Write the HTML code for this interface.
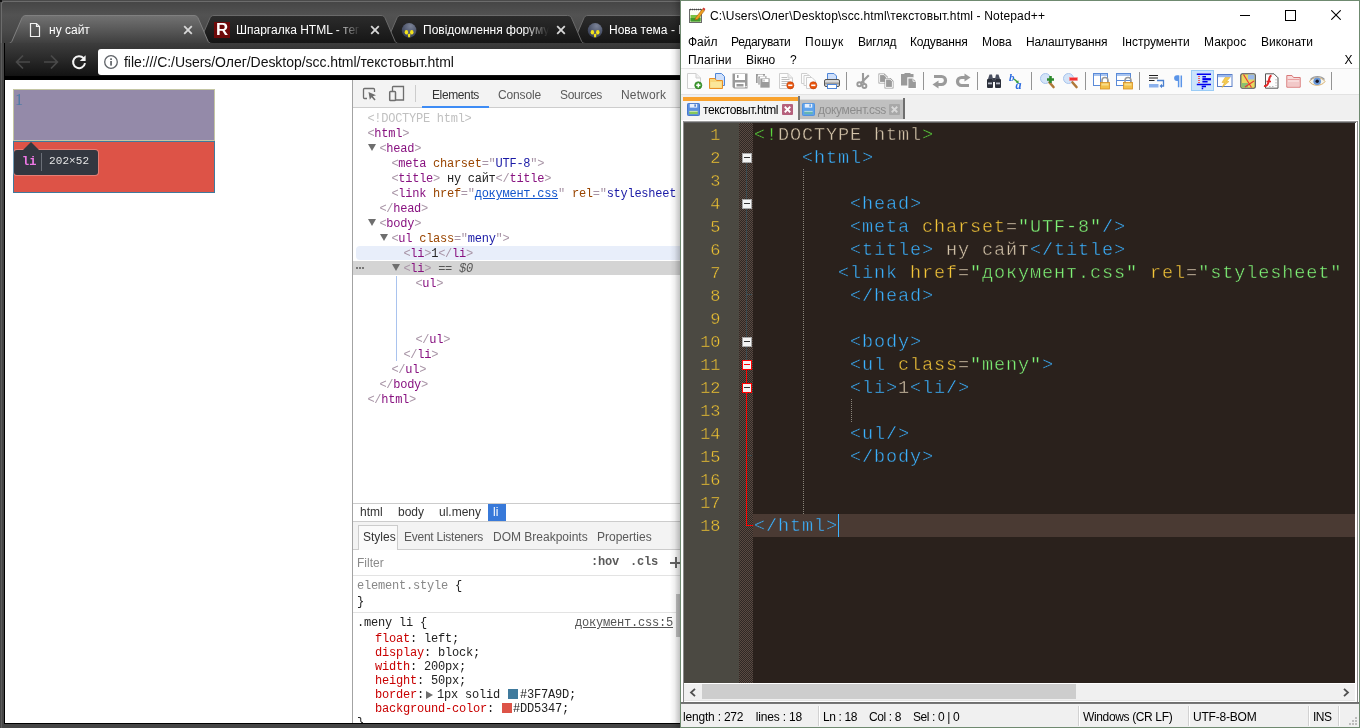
<!DOCTYPE html>
<html>
<head>
<meta charset="UTF-8">
<title>screenshot</title>
<style>
*{box-sizing:border-box;margin:0;padding:0}
html,body{width:1360px;height:728px;overflow:hidden;background:#3c3c3c;font-family:"Liberation Sans",sans-serif;}
.abs{position:absolute}
.t{position:absolute;white-space:pre;line-height:1}
/* ---------- Chrome window ---------- */
#chrome{position:absolute;left:0;top:0;width:684px;height:728px;background:#3b3b3b;overflow:hidden}
#cframeTop{position:absolute;left:0;top:0;width:684px;height:44px;background:linear-gradient(#444 0,#525252 15px,#4a4a4a 30px,#3c3c3c 43px)}
#ctoolbar{position:absolute;left:5px;top:43px;width:680px;height:34px;background:linear-gradient(#3d3d3d,#2a2a2a 45%,#111 100%)}
#cblack{position:absolute;left:5px;top:75.5px;width:680px;height:4.5px;background:#000}
#cpage{position:absolute;left:5px;top:80px;width:348px;height:643px;background:#fff}
#urlbox{position:absolute;left:98px;top:49px;width:600px;height:26px;background:#fff;border-radius:3px 0 0 3px}
.ctab{font-size:12px;color:#fff}
/* ---------- DevTools ---------- */
#dev{position:absolute;left:352px;top:80px;width:332px;height:643px;background:#fff;border-left:1px solid #a3a3a3;overflow:hidden}
.mono{font-family:"Liberation Mono",monospace;font-size:12px;letter-spacing:-0.2px}
#dom .r{position:absolute;margin-top:2px;margin-left:-0.6px;left:0;height:15px;line-height:15px;white-space:pre;font-family:"Liberation Mono",monospace;font-size:12px;letter-spacing:-0.26px;color:#222}
.tg{color:#881280}.br{color:#a894a6}.an{color:#994500}.av{color:#1a1aa6}.eq{color:#a894a6}
.arr{position:absolute;width:0;height:0;border-left:4.5px solid transparent;border-right:4.5px solid transparent;border-top:7px solid #6e6e6e}
/* ---------- Notepad++ ---------- */
#npp{position:absolute;left:680px;top:0;width:680px;height:728px;background:#fff;overflow:hidden}
#npp .m{position:absolute;white-space:pre;line-height:1;font-size:12px;color:#000}
.code{position:absolute;white-space:pre;font-family:"Liberation Mono",monospace;font-size:18.5px;letter-spacing:0.9px;margin-top:1.4px;line-height:23px;height:23px;color:#d4c4aa;-webkit-text-stroke:0.42px #2a211c}
.code.hl{-webkit-text-stroke:0.42px #4a3a33}
.ln{position:absolute;margin-top:0.8px;left:0;width:36.3px;text-align:right;font-family:"Liberation Mono",monospace;font-size:17px;letter-spacing:-0.2px;line-height:23px;height:23px;color:#f0c432;-webkit-text-stroke:0.4px #4b4942}
.cb{color:#3cb2ff}.ca{color:#f4c63a}.cs{color:#80f478}.cd{color:#c8b9a0}.cg{color:#5cd83e}
</style>
</head>
<body><div id="aa" style="position:absolute;left:0;top:0;width:1360px;height:728px;will-change:transform">
<!-- ================= CHROME ================= -->
<div id="chrome">
  <div id="cframeTop"></div>
  <div class="abs" style="left:0;top:0;width:684px;height:44px;border-top-left-radius:4px;box-shadow:inset 1px 1px 0 1px #4a4a4a"></div><div class="abs" style="left:1px;top:1px;width:683px;height:43px;border-left:1px solid #6c6c6c;border-top:1px solid #6c6c6c;border-top-left-radius:3px"></div><div class="abs" style="left:0;top:0;width:2px;height:2px;background:#111"></div><div class="abs" style="left:4px;top:43px;width:8px;height:1px;background:#8a8a8a"></div>
  <svg class="abs" style="left:0;top:0" width="684" height="44" viewBox="0 0 684 44"><defs><linearGradient id="ga" x1="0" y1="0" x2="0" y2="1"><stop offset="0" stop-color="#727272"/><stop offset="0.5" stop-color="#595959"/><stop offset="1" stop-color="#3e3e3e"/></linearGradient><linearGradient id="gi" x1="0" y1="0" x2="0" y2="1"><stop offset="0" stop-color="#2c2c2c"/><stop offset="1" stop-color="#151515"/></linearGradient></defs><path d="M570,43.5 C572.5,43.5 573.5,42.5 574.5,40.0 L583.5,19.0 C584.5,16.5 585.5,15.5 588,15.5 L757,15.5 C759.5,15.5 760.5,16.5 761.5,19.0 L770.5,40.0 C771.5,42.5 772.5,43.5 775,43.5 Z" fill="url(#gi)" stroke="none"/><path d="M570,43.5 C572.5,43.5 573.5,42.5 574.5,40.0 L583.5,19.0 C584.5,16.5 585.5,15.5 588,15.5 L757,15.5 C759.5,15.5 760.5,16.5 761.5,19.0 L770.5,40.0 C771.5,42.5 772.5,43.5 775,43.5" fill="none" stroke="#6a6a6a" stroke-width="1"/><path d="M383,43.5 C385.5,43.5 386.5,42.5 387.5,40.0 L396.5,19.0 C397.5,16.5 398.5,15.5 401,15.5 L567.5,15.5 C570.0,15.5 571.0,16.5 572.0,19.0 L581.0,40.0 C582.0,42.5 583.0,43.5 585.5,43.5 Z" fill="url(#gi)" stroke="none"/><path d="M383,43.5 C385.5,43.5 386.5,42.5 387.5,40.0 L396.5,19.0 C397.5,16.5 398.5,15.5 401,15.5 L567.5,15.5 C570.0,15.5 571.0,16.5 572.0,19.0 L581.0,40.0 C582.0,42.5 583.0,43.5 585.5,43.5" fill="none" stroke="#6a6a6a" stroke-width="1"/><path d="M196,43.5 C198.5,43.5 199.5,42.5 200.5,40.0 L209.5,19.0 C210.5,16.5 211.5,15.5 214,15.5 L381,15.5 C383.5,15.5 384.5,16.5 385.5,19.0 L394.5,40.0 C395.5,42.5 396.5,43.5 399,43.5 Z" fill="url(#gi)" stroke="none"/><path d="M196,43.5 C198.5,43.5 199.5,42.5 200.5,40.0 L209.5,19.0 C210.5,16.5 211.5,15.5 214,15.5 L381,15.5 C383.5,15.5 384.5,16.5 385.5,19.0 L394.5,40.0 C395.5,42.5 396.5,43.5 399,43.5" fill="none" stroke="#6a6a6a" stroke-width="1"/><rect x="0" y="43" width="684" height="1" fill="#4b4b4b"/><path d="M8,43.5 C10.5,43.5 11.5,42.5 12.5,40.0 L21.5,19.0 C22.5,16.5 23.5,15.5 26,15.5 L194,15.5 C196.5,15.5 197.5,16.5 198.5,19.0 L207.5,40.0 C208.5,42.5 209.5,43.5 212,43.5 Z" fill="url(#ga)" stroke="none"/><path d="M8,43.5 C10.5,43.5 11.5,42.5 12.5,40.0 L21.5,19.0 C22.5,16.5 23.5,15.5 26,15.5 L194,15.5 C196.5,15.5 197.5,16.5 198.5,19.0 L207.5,40.0 C208.5,42.5 209.5,43.5 212,43.5" fill="none" stroke="#808080" stroke-width="1"/></svg>
  
  <!-- tab 1 -->
  <svg class="abs" style="left:29px;top:22px" width="12" height="16" viewBox="0 0 12 16"><path d="M1.5,1.5 H7.5 L10.5,4.5 V14.5 H1.5 Z M7.5,1.5 V4.5 H10.5" fill="none" stroke="#f2f2f2" stroke-width="1.2"/></svg>
  <div class="t ctab" id="tt1" style="left:49px;top:24px">ну сайт</div>
  <svg class="abs x" style="left:183px;top:25px" width="10" height="10" viewBox="0 0 10 10"><path d="M1.2,1.2 L8.8,8.8 M8.8,1.2 L1.2,8.8" stroke="#d8d8d8" stroke-width="1.8"/></svg>
  <!-- tab 2 -->
  <div class="abs" style="left:214px;top:22px;width:16px;height:16px;background:#6e0a0a"></div>
  <div class="t" style="left:216px;top:22px;font-size:16px;font-weight:bold;color:#fff;transform:scaleX(1.05);transform-origin:0 0">R</div>
  <div class="t ctab" id="tt2" style="left:236px;top:24px;width:125px;overflow:hidden;-webkit-mask-image:linear-gradient(90deg,#000 80%,transparent 100%)">Шпаргалка HTML - тег</div>
  <svg class="abs x" style="left:370px;top:25px" width="10" height="10" viewBox="0 0 10 10"><path d="M1.2,1.2 L8.8,8.8 M8.8,1.2 L1.2,8.8" stroke="#d8d8d8" stroke-width="1.8"/></svg>
  <!-- tab 3 -->
  <svg class="abs" style="left:401px;top:22px" width="16" height="16" viewBox="0 0 16 16"><defs><radialGradient id="fg1" cx=".6" cy=".2" r=".8"><stop offset="0" stop-color="#7a8296"/><stop offset="1" stop-color="#353d55"/></radialGradient></defs><circle cx="8.1" cy="8.4" r="7.3" fill="url(#fg1)"/><ellipse cx="5.4" cy="10.3" rx="1.7" ry="2.3" fill="#f2e21c"/><ellipse cx="10.8" cy="10.3" rx="1.7" ry="2.3" fill="#f2e21c"/><path d="M6.6,12.6 L8.1,11.4 L9.6,12.6 L9,14.2 L9.4,15.3 H6.8 L7.2,14.2 Z" fill="#f2e21c"/></svg>
  <div class="t ctab" id="tt3" style="left:423px;top:24px;width:126px;overflow:hidden;-webkit-mask-image:linear-gradient(90deg,#000 80%,transparent 100%)">Повідомлення форуму</div>
  <svg class="abs x" style="left:556px;top:25px" width="10" height="10" viewBox="0 0 10 10"><path d="M1.2,1.2 L8.8,8.8 M8.8,1.2 L1.2,8.8" stroke="#d8d8d8" stroke-width="1.8"/></svg>
  <!-- tab 4 -->
  <svg class="abs" style="left:587px;top:22px" width="16" height="16" viewBox="0 0 16 16"><circle cx="8.1" cy="8.4" r="7.3" fill="url(#fg1)"/><ellipse cx="5.4" cy="10.3" rx="1.7" ry="2.3" fill="#f2e21c"/><ellipse cx="10.8" cy="10.3" rx="1.7" ry="2.3" fill="#f2e21c"/><path d="M6.6,12.6 L8.1,11.4 L9.6,12.6 L9,14.2 L9.4,15.3 H6.8 L7.2,14.2 Z" fill="#f2e21c"/></svg>
  <div class="t ctab" id="tt4" style="left:609px;top:24px">Нова тема - Н</div>

  <div id="ctoolbar"></div>
  <div id="cblack"></div>
  
  <div id="urlbox"></div>
  <svg class="abs" style="left:15px;top:54px" width="16" height="16" viewBox="0 0 16 16"><path d="M15,8 H2.5 M8,1.5 L1.6,8 L8,14.5" fill="none" stroke="#4a4a4a" stroke-width="1.7"/></svg>
  <svg class="abs" style="left:43px;top:54px" width="16" height="16" viewBox="0 0 16 16"><path d="M1,8 H13.5 M8,1.5 L14.4,8 L8,14.5" fill="none" stroke="#4a4a4a" stroke-width="1.7"/></svg>
  <svg class="abs" style="left:71px;top:54px" width="16" height="16" viewBox="0 0 16 16"><path d="M12.6,4.2 A6,6 0 1 0 14,9.2" fill="none" stroke="#f4f4f4" stroke-width="2"/><path d="M14.6,1.2 V7 H8.8 Z" fill="#f4f4f4"/></svg>
  <svg class="abs" style="left:103px;top:54px" width="16" height="16" viewBox="0 0 16 16"><circle cx="8" cy="8" r="6.3" fill="none" stroke="#5f6368" stroke-width="1.3"/><rect x="7.2" y="7" width="1.7" height="4.6" fill="#5f6368"/><rect x="7.2" y="4.3" width="1.7" height="1.7" fill="#5f6368"/></svg>
  <div class="t" id="url" style="letter-spacing:-0.04px;left:124px;top:55px;font-size:14px;color:#111">file:///C:/Users/Олег/Desktop/scc.html/текстовыт.html</div>

  <div id="cpage">
    
    <div class="abs" style="left:8px;top:9px;width:202px;height:52px;background:#948aa9;border:1px solid #c4c6a4"></div>
    <div class="t" style="left:10px;top:12px;font-family:'Liberation Serif',serif;font-size:16px;color:#4d7ba6">1</div>
    <div class="abs" style="left:8px;top:61px;width:202px;height:52px;background:#dd5347;border:1px solid #3f7a9d"></div>
    <!-- tooltip -->
    <div class="abs" style="left:9px;top:69.5px;width:84px;height:25px;background:#333740;border-radius:3px;box-shadow:0 0 0 1px rgba(255,255,255,.25)"></div>
    <div class="abs" style="left:18px;top:62px;width:0;height:0;border-left:8px solid transparent;border-right:8px solid transparent;border-bottom:8px solid #333740"></div>
    <div class="t" style="left:17px;top:76px;font-family:'Liberation Mono',monospace;font-size:12px;font-weight:bold;color:#ee78e6">li</div>
    <div class="abs" style="left:36px;top:73px;width:1px;height:18px;background:#6b6f78"></div>
    <div class="t" style="left:44px;top:76px;font-family:'Liberation Mono',monospace;font-size:11px;color:#e6e6e6;letter-spacing:0.1px">202×52</div>

  </div>
  <div id="dev">
    <div class="abs" style="left:0;top:0;width:331px;height:28px;background:#f3f3f3;border-bottom:1px solid #cdcdcd"></div>
<svg class="abs" style="left:9.2px;top:6.4px" width="16" height="16" viewBox="0 0 16 16"><path d="M12.5,6 V3.5 Q12.5,2.5 11.5,2.5 H2.5 Q1.5,2.5 1.5,3.5 V11.5 Q1.5,12.5 2.5,12.5 H5" fill="none" stroke="#6e6e6e" stroke-width="1.3"/><path d="M6.5,6 L14,9.2 L10.8,10.3 L13.6,13.6 L12.4,14.6 L9.6,11.3 L7.8,13.8 Z" fill="#6e6e6e"/></svg>
<svg class="abs" style="left:34.7px;top:3.8px" width="18" height="18" viewBox="0 0 18 18"><path d="M4.5,7 V3.2 Q4.5,2.5 5.2,2.500 H15.5 V16 H8" fill="none" stroke="#6e6e6e" stroke-width="1.300"/><rect x="1.700" y="7.600" width="5.800" height="9" rx=".8" fill="none" stroke="#6e6e6e" stroke-width="1.500"/></svg>
<div class="abs" style="left:62px;top:5px;width:1px;height:17px;background:#ccc"></div>
<div class="t" id="dt1" style="letter-spacing:-0.38px;left:79px;top:9px;font-size:12px;color:#333">Elements</div>
<div class="t" id="dt2" style="letter-spacing:-0.15px;left:145px;top:9px;font-size:12px;color:#5a5a5a">Console</div>
<div class="t" id="dt3" style="letter-spacing:-0.28px;left:207px;top:9px;font-size:12px;color:#5a5a5a">Sources</div>
<div class="t" id="dt4" style="letter-spacing:0.15px;left:268px;top:9px;font-size:12px;color:#5a5a5a">Network</div>
<div class="abs" style="left:69px;top:26px;width:67px;height:2px;background:#3e8cf5"></div>
<div id="dom">
<div class="abs" style="left:3px;top:166px;width:340px;height:14px;background:#e8eefa;border-radius:4px 0 0 4px"></div>
<div class="abs" style="left:0;top:181px;width:340px;height:14px;background:#d4d4d4"></div>
<div class="abs" style="left:43px;top:196px;width:1px;height:85px;background:#a9c3ee"></div>
<div class="r" style="left:15px;top:30px;"><span style="color:#c0c0c0">&lt;!DOCTYPE html&gt;</span></div>
<div class="r" style="left:15px;top:45px;"><span class="br">&lt;</span><span class="tg">html</span><span class="br">&gt;</span></div>
<div class="arr" style="left:15px;top:64px"></div>
<div class="r" style="left:27px;top:60px;"><span class="br">&lt;</span><span class="tg">head</span><span class="br">&gt;</span></div>
<div class="r" style="left:39px;top:75px;"><span class="br">&lt;</span><span class="tg">meta</span> <span class="an">charset</span><span class="br">="</span><span class="av">UTF-8</span><span class="br">"</span><span class="br">&gt;</span></div>
<div class="r" style="left:39px;top:90px;"><span class="br">&lt;</span><span class="tg">title</span><span class="br">&gt;</span> ну сайт<span class="br">&lt;/</span><span class="tg">title</span><span class="br">&gt;</span></div>
<div class="r" style="left:39px;top:105px;"><span class="br">&lt;</span><span class="tg">link</span> <span class="an">href</span><span class="br">="</span><span style="color:#1155cc;text-decoration:underline">документ.css</span><span class="br">"</span> <span class="an">rel</span><span class="br">="</span><span class="av">stylesheet</span></div>
<div class="r" style="left:27px;top:120px;"><span class="br">&lt;/</span><span class="tg">head</span><span class="br">&gt;</span></div>
<div class="arr" style="left:15px;top:139px"></div>
<div class="r" style="left:27px;top:135px;"><span class="br">&lt;</span><span class="tg">body</span><span class="br">&gt;</span></div>
<div class="arr" style="left:27px;top:154px"></div>
<div class="r" style="left:39px;top:150px;"><span class="br">&lt;</span><span class="tg">ul</span> <span class="an">class</span><span class="br">="</span><span class="av">meny</span><span class="br">"</span><span class="br">&gt;</span></div>
<div class="r" style="left:51px;top:165px;"><span class="br">&lt;</span><span class="tg">li</span><span class="br">&gt;</span>1<span class="br">&lt;/</span><span class="tg">li</span><span class="br">&gt;</span></div>
<div class="abs" style="left:3px;top:187px;width:2px;height:2px;background:#777;box-shadow:3px 0 #777,6px 0 #777"></div>
<div class="arr" style="left:39px;top:184px"></div>
<div class="r" style="left:51px;top:180px;"><span class="br">&lt;</span><span class="tg">li</span><span class="br">&gt;</span><span style="color:#555"> == <i>$0</i></span></div>
<div class="r" style="left:63px;top:195px;"><span class="br">&lt;</span><span class="tg">ul</span><span class="br">&gt;</span></div>
<div class="r" style="left:63px;top:251px;"><span class="br">&lt;/</span><span class="tg">ul</span><span class="br">&gt;</span></div>
<div class="r" style="left:51px;top:266px;"><span class="br">&lt;/</span><span class="tg">li</span><span class="br">&gt;</span></div>
<div class="r" style="left:39px;top:281px;"><span class="br">&lt;/</span><span class="tg">ul</span><span class="br">&gt;</span></div>
<div class="r" style="left:27px;top:296px;"><span class="br">&lt;/</span><span class="tg">body</span><span class="br">&gt;</span></div>
<div class="r" style="left:15px;top:311px;"><span class="br">&lt;/</span><span class="tg">html</span><span class="br">&gt;</span></div>
</div>
<div class="abs" style="left:0;top:423px;width:331px;height:19px;background:#fff;border-top:1px solid #ccc;border-bottom:1px solid #ccc"></div>
<div class="abs" style="left:135px;top:424px;width:18px;height:17px;background:#3879d9"></div>
<div class="t" id="bc1" style="left:7px;top:426px;font-size:12px;color:#333">html</div>
<div class="t" id="bc2" style="left:45px;top:426px;font-size:12px;color:#333">body</div>
<div class="t" id="bc3" style="left:86px;top:426px;font-size:12px;color:#333">ul.meny</div>
<div class="t" id="bc4" style="left:140px;top:426px;font-size:12px;color:#fff">li</div>
<div class="abs" style="left:0;top:442px;width:331px;height:28px;background:#f3f3f3;border-bottom:1px solid #ccc"></div>
<div class="abs" style="left:5px;top:445px;width:40px;height:25px;background:#fafafa;border:1px solid #ccc;border-bottom:none"></div>
<div class="t" id="st1" style="left:10px;top:451px;font-size:12px;color:#333">Styles</div>
<div class="t" id="st2" style="letter-spacing:-0.25px;left:51px;top:451px;font-size:12px;color:#5a5a5a">Event Listeners</div>
<div class="t" id="st3" style="left:140px;top:451px;font-size:12px;color:#5a5a5a">DOM Breakpoints</div>
<div class="t" id="st4" style="left:244px;top:451px;font-size:12px;color:#5a5a5a">Properties</div>
<div class="abs" style="left:0;top:470px;width:331px;height:26px;background:#fff;border-bottom:1px solid #e3e3e3"></div>
<div class="t" id="flt" style="left:4px;top:477px;font-size:12px;color:#8a8a8a">Filter</div>
<div class="t mono" style="left:238px;top:476px;color:#5a5a5a;font-weight:bold">:hov</div>
<div class="t mono" style="left:277px;top:476px;color:#5a5a5a;font-weight:bold">.cls</div>
<div class="abs" style="left:317px;top:482px;width:11px;height:1.5px;background:#666"></div><div class="abs" style="left:322px;top:477px;width:1.5px;height:11px;background:#666"></div>
<div class="t mono"  style="left:4px;top:500px;color:#222"><span style="color:#888">element.style</span> {</div>
<div class="t mono"  style="left:4px;top:516px;color:#222">}</div>
<div class="abs" style="left:0;top:532px;width:323px;height:1px;background:#e3e3e3"></div>
<div class="t mono"  style="left:4px;top:537px;color:#222">.meny li {</div>
<div class="t mono" id=srcl style="left:222px;top:537px;color:#222"><span style="color:#555;text-decoration:underline">документ.css:5</span></div>
<div class="t mono" id=p1 style="left:22px;top:553px;color:#222"><span style="color:#c80000">float</span>: left;</div>
<div class="t mono"  style="left:22px;top:567px;color:#222"><span style="color:#c80000">display</span>: block;</div>
<div class="t mono"  style="left:22px;top:581px;color:#222"><span style="color:#c80000">width</span>: 200px;</div>
<div class="t mono"  style="left:22px;top:595px;color:#222"><span style="color:#c80000">height</span>: 50px;</div>
<div class="t mono" id=p5 style="left:22px;top:609px;color:#222"><span style="color:#c80000">border</span>:<span style="display:inline-block;width:0;height:0;border-top:4px solid transparent;border-bottom:4px solid transparent;border-left:7px solid #6e6e6e;margin:0 4px 0 2px;vertical-align:-1px"></span>1px solid <span style="display:inline-block;width:10px;height:10px;background:#3f7a9d;margin:0 2px 0 1px;vertical-align:-1px;outline:0"></span>#3F7A9D;</div>
<div class="t mono" id=p6 style="left:22px;top:623px;color:#222"><span style="color:#c80000">background-color</span>: <span style="display:inline-block;width:10px;height:10px;background:#dd5347;margin:0 1px 0 1px;vertical-align:-1px;outline:0"></span>#DD5347;</div>
<div class="t mono"  style="left:4px;top:637px;color:#222">}</div>
<div class="abs" style="left:323px;top:514px;width:4px;height:43px;background:#c4c4c4"></div>
  </div>
  <!-- frame edges -->
  <div class="abs" style="left:0;top:43px;width:5px;height:685px;background:linear-gradient(90deg,#454545 0,#454545 1px,#5c5c5c 1px,#5c5c5c 2px,#464646 2px,#464646 4px,#000 4px)"></div>
  <div class="abs" style="left:4px;top:723px;width:680px;height:5px;background:linear-gradient(#000 0,#000 1.4px,#454545 1.4px)"></div>
</div>
<!-- shadow of notepad window -->
<div class="abs" style="left:670px;top:0;width:10px;height:728px;background:linear-gradient(90deg,rgba(0,0,0,0),rgba(0,0,0,.06) 45%,rgba(0,0,0,.24))"></div>
<!-- ================= NOTEPAD++ ================= -->
<div id="npp">
  <div class="m" id=ntitle style="letter-spacing:0.16px;left:30px;top:10px;">C:\Users\Олег\Desktop\scc.html\текстовыт.html - Notepad++</div>
<svg class="abs" style="left:8px;top:6px" width="18" height="18" viewBox="0 0 18 18"><rect x="1.5" y="3.5" width="12" height="13" fill="#fdfdf4" stroke="#6a6a6a" stroke-width="1"/><rect x="2.5" y="9" width="10" height="6.5" fill="#7cc242"/><rect x="2.5" y="12" width="10" height="3.5" fill="#3f9a2b"/><path d="M2,3.5 h11" stroke="#444" stroke-width="1.6" stroke-dasharray="1 1"/><path d="M7.5,12 L14.5,3 L16.5,4.6 L9.8,13.2 L7,14 Z" fill="#f0a020" stroke="#a05a10" stroke-width=".6"/><path d="M14.5,3 L15.6,1.6 L17.4,3 L16.5,4.6 Z" fill="#d03030"/></svg>
<div class="abs" style="left:560px;top:15px;width:10px;height:1px;background:#000"></div>
<div class="abs" style="left:605px;top:10px;width:11px;height:11px;border:1px solid #000"></div>
<svg class="abs" style="left:651px;top:10px" width="10" height="10" viewBox="0 0 10 10"><path d="M0.3,0.3 L9.7,9.7 M9.7,0.3 L0.3,9.7" stroke="#000" stroke-width="1.1"/></svg>
<div class="m" id=m1 style="left:8px;top:35.5px;">Файл</div>
<div class="m" id=m2 style="letter-spacing:-0.33px;left:51px;top:35.5px;">Редагувати</div>
<div class="m" id=m3 style="letter-spacing:0.5px;left:125px;top:35.5px;">Пошук</div>
<div class="m" id=m4 style="letter-spacing:-0.17px;left:178px;top:35.5px;">Вигляд</div>
<div class="m" id=m5 style="letter-spacing:-0.18px;left:230px;top:35.5px;">Кодування</div>
<div class="m" id=m6 style="left:302px;top:35.5px;">Мова</div>
<div class="m" id=m7 style="letter-spacing:-0.12px;left:346px;top:35.5px;">Налаштування</div>
<div class="m" id=m8 style="left:442px;top:35.5px;">Інструменти</div>
<div class="m" id=m9 style="letter-spacing:0.15px;left:524px;top:35.5px;">Макрос</div>
<div class="m" id=m10 style="left:581px;top:35.5px;">Виконати</div>
<div class="m" id=m11 style="letter-spacing:0.15px;left:8px;top:54px;">Плагіни</div>
<div class="m" id=m12 style="left:66px;top:54px;">Вікно</div>
<div class="m" id=m13 style="left:110px;top:54px;">?</div>
<div class="m" id=m14 style="left:664.5px;top:54px;">X</div>
<div class="abs" style="left:1px;top:68px;width:678px;height:27px;background:#fbfbfb;border-top:1px solid #e6e6e6;border-bottom:1px solid #e2e2e2"></div>
<div class="abs" style="left:511px;top:70px;width:23px;height:21px;background:#cce4fb;border:1px solid #9acbf5"></div>
<svg class="abs" style="left:6px;top:73px;overflow:visible" width="16" height="16" viewBox="0 0 16 16"><path d="M1.5,.5 H10 L14.5,5 V15.5 H1.5 Z" fill="#fdfdfd" stroke="#cfcfcf"/><path d="M10,.5 V5 H14.5" fill="#eee" stroke="#cfcfcf"/><circle cx="12.3" cy="12.3" r="3.6" fill="#3c9a2e" stroke="#2c7a22" stroke-width=".6"/><path d="M12.3,10.2 V14.4 M10.2,12.3 H14.4" stroke="#fff" stroke-width="1.5"/></svg>
<svg class="abs" style="left:29px;top:73px;overflow:visible" width="16" height="16" viewBox="0 0 16 16"><path d="M6.5,.5 H12.5 L15.5,3.5 V12.5 H6.5 Z" fill="#cfe0fb" stroke="#4f86d8"/><path d="M.5,5.5 H6 L7.5,7.5 H13.5 V15.5 H.5 Z" fill="#f9d77a" stroke="#e89028"/><rect x="1.5" y="9" width="11" height="5.5" fill="#fbe69a"/></svg>
<svg class="abs" style="left:52px;top:73px;overflow:visible" width="16" height="16" viewBox="0 0 16 16"><path d="M.5,.5 H15.5 V15.5 H2 L.5,14 Z" fill="#9a9a9a"/><rect x="3" y="1" width="10" height="6" fill="#fff"/><rect x="5" y="2" width="1.5" height="3" fill="#9a9a9a"/><rect x="3" y="9.5" width="10" height="5" fill="#fff"/><rect x="4.5" y="11" width="7" height="2.5" fill="#9a9a9a"/><rect x="13.5" y="13" width="1.2" height="1.2" fill="#fff"/></svg>
<svg class="abs" style="left:75px;top:73px;overflow:visible" width="16" height="16" viewBox="0 0 16 16"><rect x="1" y="1" width="9" height="9" fill="#9a9a9a"/><rect x="3" y="3" width="9" height="9" fill="#9a9a9a" stroke="#fbfbfb" stroke-width=".7"/><rect x="5" y="5" width="10" height="10" fill="#9a9a9a" stroke="#fbfbfb" stroke-width=".7"/><rect x="3" y="1.6" width="5" height="1.6" fill="#fff"/><rect x="5" y="3.6" width="5" height="1.6" fill="#fff"/><rect x="7.5" y="6" width="6" height="3" fill="#fff"/><rect x="8.5" y="6.5" width="1" height="2" fill="#9a9a9a"/></svg>
<svg class="abs" style="left:98px;top:73px;overflow:visible" width="16" height="16" viewBox="0 0 16 16"><path d="M1.5,.5 H10 L14.5,5 V15.5 H1.5 Z" fill="#fdfdfd" stroke="#cfcfcf"/><path d="M10,.5 V5 H14.5" fill="#eee" stroke="#cfcfcf"/><path d="M3.5,4.5 H9 M3.5,6.5 H11.5 M3.5,8.5 H11.5 M3.5,10.5 H9 M3.5,12.5 H8" stroke="#b8b8b8" stroke-width=".9"/><circle cx="12.3" cy="12.3" r="3.6" fill="#e8540c" stroke="#c03c08" stroke-width=".6"/><path d="M10.2,12.3 H14.4" stroke="#fff" stroke-width="1.6"/></svg>
<svg class="abs" style="left:121px;top:73px;overflow:visible" width="16" height="16" viewBox="0 0 16 16"><path d="M.5,.5 H6 L9,3.5 V10.5 H.5 Z" fill="#fdfdfd" stroke="#cfcfcf"/><path d="M3,2.5 H8.5 L11.5,5.5 V12.5 H3 Z" fill="#fdfdfd" stroke="#cfcfcf"/><path d="M5.5,4.5 H11 L14.5,8 V15.5 H5.5 Z" fill="#fdfdfd" stroke="#cfcfcf"/><circle cx="12.3" cy="12.3" r="3.6" fill="#e8540c" stroke="#c03c08" stroke-width=".6"/><path d="M10.2,12.3 H14.4" stroke="#fff" stroke-width="1.6"/></svg>
<svg class="abs" style="left:144px;top:73px;overflow:visible" width="16" height="16" viewBox="0 0 16 16"><path d="M3.5,.5 H10 L12.5,3 V8 H3.5 Z" fill="#cfe0fb" stroke="#4f86d8"/><rect x=".5" y="6.5" width="15" height="7" rx="1.5" fill="#d8d8d8" stroke="#555"/><rect x="1" y="9.5" width="14" height="2" fill="#9a9a9a"/><rect x="3.5" y="11.5" width="9" height="4" fill="#fff" stroke="#4f86d8"/></svg>
<div class="abs" style="left:166px;top:72px;width:1.3px;height:18px;background:#949494"></div>
<svg class="abs" style="left:175px;top:73px;overflow:visible" width="16" height="16" viewBox="0 0 16 16"><path d="M8,0 V8.5 M13.8,2.2 L6.3,9.8" stroke="#9a9a9a" stroke-width="2.1"/><circle cx="4.3" cy="11.3" r="2" fill="none" stroke="#9a9a9a" stroke-width="1.9"/><circle cx="9.4" cy="13" r="2" fill="none" stroke="#9a9a9a" stroke-width="1.9"/><path d="M5.5,9.5 L8,7.5 L9.5,8.5 L9.8,11 L7,10.5 Z" fill="#9a9a9a"/></svg>
<svg class="abs" style="left:198px;top:73px;overflow:visible" width="16" height="16" viewBox="0 0 16 16"><path d="M.5,.5 H6.5 L9.5,3.5 V10.5 H.5 Z" fill="#9a9a9a" stroke="#fbfbfb" stroke-width="0"/><path d="M1.6,1.6 H6 L8.4,4 V9.4 H1.6 Z" fill="#9a9a9a" stroke="#fff" stroke-width=".9"/><path d="M6.5,5 H12.5 L15.5,8 V15.5 H6.5 Z" fill="#9a9a9a"/><path d="M7.6,6.1 H12 L14.4,8.5 V14.4 H7.6 Z" fill="#9a9a9a" stroke="#fff" stroke-width=".9"/></svg>
<svg class="abs" style="left:221px;top:73px;overflow:visible" width="16" height="16" viewBox="0 0 16 16"><path d="M0,1 H3.5 V0 H9.5 V1 H12.5 V12.5 H0 Z" fill="#9a9a9a"/><path d="M6.3,4.3 H12.5 L16,7.8 V16 H6.3 Z" fill="#fff"/><path d="M7.4,5.4 H12 L14.9,8.3 V14.9 H7.4 Z" fill="#9a9a9a"/><path d="M12,5.4 V8.3 H14.9" fill="none" stroke="#fff" stroke-width=".8"/></svg>
<div class="abs" style="left:243px;top:72px;width:1.3px;height:18px;background:#949494"></div>
<svg class="abs" style="left:252px;top:73px;overflow:visible" width="16" height="16" viewBox="0 0 16 16"><path d="M2,3.5 H9.5 A4,4 0 0 1 9.5,11.5 H6" fill="none" stroke="#9a9a9a" stroke-width="3.2"/><path d="M.5,11.5 L6.5,7.5 V15.5 Z" fill="#9a9a9a"/></svg>
<svg class="abs" style="left:275px;top:73px;overflow:visible" width="16" height="16" viewBox="0 0 16 16"><path d="M14,12.5 H6.5 A4,4 0 0 1 6.5,4.5 H10" fill="none" stroke="#9a9a9a" stroke-width="3.2"/><path d="M15.5,4.5 L9.5,.5 V8.5 Z" fill="#9a9a9a"/></svg>
<div class="abs" style="left:297px;top:72px;width:1.3px;height:18px;background:#949494"></div>
<svg class="abs" style="left:306px;top:73px;overflow:visible" width="16" height="16" viewBox="0 0 16 16"><rect x="1" y="6" width="6" height="9" rx="1" fill="#2b2f3a"/><rect x="9" y="6" width="6" height="9" rx="1" fill="#2b2f3a"/><path d="M2,6 L3.5,1.5 H6 L7,6 Z M9,6 L10,1.5 H12.5 L14,6 Z" fill="#4a5060"/><rect x="6.5" y="5" width="3" height="4" fill="#3a3f4c"/><rect x="2" y="9.5" width="4" height="1.8" fill="#b8bcc8"/><rect x="10" y="9.5" width="4" height="1.8" fill="#b8bcc8"/></svg>
<svg class="abs" style="left:329px;top:73px;overflow:visible" width="16" height="16" viewBox="0 0 16 16"><text x="0" y="8" font-family="Liberation Serif" font-style="italic" font-weight="bold" font-size="11" fill="#2a6ae0">b</text><text x="6.5" y="15.5" font-family="Liberation Serif" font-style="italic" font-weight="bold" font-size="12" fill="#2a6ae0">a</text><path d="M5,6 L9,9.5" stroke="#3aa040" stroke-width="1.4"/><path d="M9.8,10.2 L6.8,9.6 L9.2,7.3 Z" fill="#3aa040"/></svg>
<div class="abs" style="left:351px;top:72px;width:1.3px;height:18px;background:#949494"></div>
<svg class="abs" style="left:360px;top:73px;overflow:visible" width="16" height="16" viewBox="0 0 16 16"><circle cx="5.5" cy="5.5" r="5" fill="#d4e4f8" stroke="#a8c4ec"/><path d="M9.5,9.5 L13.5,14" stroke="#b07838" stroke-width="2.6" stroke-linecap="round"/><path d="M10.5,3 V10 M7,6.5 H14" stroke="#2e8a2e" stroke-width="2.6"/></svg>
<svg class="abs" style="left:383px;top:73px;overflow:visible" width="16" height="16" viewBox="0 0 16 16"><circle cx="5.5" cy="5.5" r="5" fill="#d4e4f8" stroke="#a8c4ec"/><path d="M9.5,9.5 L13.5,14" stroke="#b07838" stroke-width="2.6" stroke-linecap="round"/><rect x="6.5" y="4.6" width="8" height="3" fill="#f03030" stroke="#f88" stroke-width=".5"/></svg>
<div class="abs" style="left:405px;top:72px;width:1.3px;height:18px;background:#949494"></div>
<svg class="abs" style="left:413px;top:73px;overflow:visible" width="17" height="16" viewBox="0 0 17 16"><rect x=".5" y=".5" width="14" height="12" fill="#fff" stroke="#5a8ad8"/><rect x="1" y="1" width="13" height="2" fill="#a8c4f0"/><path d="M7.5,1 V12.5" stroke="#5a8ad8"/><path d="M9,10 V7.5 A3,3 0 0 1 15,7.5 V10" fill="none" stroke="#9a9a9a" stroke-width="1.6"/><rect x="7.5" y="9.5" width="9" height="6.5" fill="#f2c04a" stroke="#d89020" stroke-width=".8"/><rect x="8.5" y="10.5" width="7" height="2" fill="#f8dc8a"/></svg>
<svg class="abs" style="left:436px;top:73px;overflow:visible" width="17" height="16" viewBox="0 0 17 16"><rect x=".5" y=".5" width="14" height="12" fill="#fff" stroke="#5a8ad8"/><rect x="1" y="1" width="13" height="2" fill="#a8c4f0"/><path d="M1,7.5 H14.5" stroke="#5a8ad8"/><path d="M9,10 V7.5 A3,3 0 0 1 15,7.5 V10" fill="none" stroke="#9a9a9a" stroke-width="1.6"/><rect x="7.5" y="9.5" width="9" height="6.5" fill="#f2c04a" stroke="#d89020" stroke-width=".8"/><rect x="8.5" y="10.5" width="7" height="2" fill="#f8dc8a"/></svg>
<div class="abs" style="left:459px;top:72px;width:1.3px;height:18px;background:#949494"></div>
<svg class="abs" style="left:468px;top:73px;overflow:visible" width="16" height="16" viewBox="0 0 16 16"><path d="M1,2.5 H10 M1,5 H10 M1,7.5 H6.5" stroke="#222" stroke-width="1.2"/><path d="M9,7.5 H15.5 V13 H13" fill="none" stroke="#4a80d0" stroke-width="1.3"/><path d="M11.5,13 L14,10.8 V15.2 Z" fill="#4a80d0"/><rect x="1" y="11" width="9.5" height="3.5" fill="#8ab0ec"/></svg>
<svg class="abs" style="left:490px;top:73px;overflow:visible" width="16" height="16" viewBox="0 0 16 16"><path d="M8.6,2.6 V14.2 M11.3,2.6 V14.2" stroke="#5a94e8" stroke-width="1.5"/><path d="M12.5,2.2 H7 A2.9,2.9 0 0 0 7,8 H8.6 V2.2 Z" fill="#5a94e8"/></svg>
<svg class="abs" style="left:515px;top:73px;overflow:visible" width="16" height="16" viewBox="0 0 16 16"><path d="M1.8,1.3 H16 M7.4,3.7 H11 M7.4,8.7 H12.6 M1.8,11.4 H16 M6.7,13.6 H11 M6.7,15.5 H8.2" stroke="#0000ee" stroke-width="1.5"/><path d="M7.4,6.2 H16" stroke="#0000ee" stroke-width="2.2"/><path d="M4,3 V10" stroke="#f00" stroke-width="1.2" stroke-dasharray="1 1"/></svg>
<svg class="abs" style="left:537px;top:73px;overflow:visible" width="16" height="16" viewBox="0 0 16 16"><rect x=".5" y="1.5" width="14.500" height="12" fill="#fff" stroke="#5a7ec8"/><rect x="1" y="2" width="13.5" height="2.2" fill="#9ab8ec"/><path d="M8,4.5 H13 L9.5,8.5 H12 L5,14.5 L7.5,9.5 H5 Z" fill="#f4cc50" stroke="#e0a828" stroke-width=".5"/></svg>
<svg class="abs" style="left:560px;top:73px;overflow:visible" width="16" height="16" viewBox="0 0 16 16"><rect x=".8" y=".8" width="14.500" height="14.500" rx="1.500" fill="#e8d860" stroke="#4a4a58" stroke-width="1.1"/><rect x="8" y="1.500" width="6.500" height="5" fill="#9ab8e8"/><path d="M1.500,10 H8 V14.500 H1.500 Z" fill="#8ac070"/><path d="M3.500,1.500 L11.500,14.500 M14,8 L5,14" stroke="#e83838" stroke-width="1.200"/></svg>
<svg class="abs" style="left:583px;top:73px;overflow:visible" width="16" height="16" viewBox="0 0 16 16"><path d="M2.500,.8 H11 L15,4.800 V15.200 H2.500 Z" fill="#fdfdfd" stroke="#555" stroke-width="1"/><path d="M13,6 V13 M6,13.500 H12" stroke="#aaa" stroke-width=".8" stroke-dasharray="1.500 1.500"/><path d="M8.500,2.500 C6,3 6.500,6 5.500,9 C5,11.500 3.500,13.500 1,13" fill="none" stroke="#e02828" stroke-width="2"/><path d="M3.500,8.500 H8" stroke="#e02828" stroke-width="1.600"/></svg>
<svg class="abs" style="left:606px;top:73px;overflow:visible" width="16" height="16" viewBox="0 0 16 16"><path d="M.8,2.500 H6 L7.500,4.500 H14.200 V14.200 H.8 Z" fill="#f8dada" stroke="#d87878" stroke-width="1"/><path d="M1.500,6.500 H13.500" stroke="#e8a0a0" stroke-width="1"/><rect x="1.500" y="9" width="12" height="4.500" fill="#f0c0c0" opacity=".7"/></svg>
<svg class="abs" style="left:629px;top:73px;overflow:visible" width="17" height="16" viewBox="0 0 17 16"><path d="M.5,8.500 C3,3.500 13,3.500 16,8.500 C13,13.500 3,13.500 .5,8.500 Z" fill="#f4f4ec" stroke="#d8b070" stroke-width="1"/><path d="M1.500,6.500 C5,2.500 12,2.500 15.500,6.500" fill="none" stroke="#9a9a9a" stroke-width="1.200"/><circle cx="8.200" cy="8.200" r="3.800" fill="#6a98d8"/><circle cx="8.200" cy="8.200" r="1.700" fill="#1a1a2a"/></svg>
<div class="abs" style="left:651px;top:72px;width:1.3px;height:18px;background:#949494"></div>
<div class="abs" style="left:1px;top:95px;width:678px;height:26px;background:#f0f0f0"></div>
<div class="abs" style="left:3px;top:97px;width:116px;height:23px;background:#f4f4f4"></div>
<div class="abs" style="left:3px;top:97px;width:116px;height:4px;background:#f9a32f"></div>
<div class="abs" style="left:118px;top:96px;width:2px;height:24px;background:#7a7a7a"></div>
<div class="abs" style="left:120px;top:98.700px;width:104px;height:20.500px;background:#c0c0c0;border-top:1px solid #dcdcdc"></div>
<div class="abs" style="left:223px;top:98px;width:1.500px;height:21px;background:#6e6e6e"></div>
<svg class="abs" style="left:7px;top:103px" width="13" height="13" viewBox="0 0 14 14"><rect x=".5" y=".5" width="13" height="13" rx="1" fill="#5b8fe0" stroke="#3a6fc8"/><rect x="3" y="1" width="8" height="4" fill="#e8f0fb"/><rect x="8" y="1.5" width="1.5" height="2.5" fill="#3a6fc8"/><rect x="2.5" y="8.5" width="9" height="3.5" fill="#86c85a"/><rect x="2.5" y="8.5" width="9" height="1" fill="#fff" opacity=".6"/></svg>
<svg class="abs" style="left:122px;top:103px" width="13" height="13" viewBox="0 0 14 14"><rect x=".5" y=".5" width="13" height="13" rx="1" fill="#5fa2ec" stroke="#4a90e0"/><rect x="3" y="1" width="8" height="4" fill="#e8f0fb"/><rect x="8" y="1.5" width="1.5" height="2.5" fill="#4a90e0"/><rect x="2.5" y="8.5" width="9" height="3.5" fill="#64b4b4"/><rect x="2.5" y="8.5" width="9" height="1" fill="#fff" opacity=".6"/></svg>
<div class="m" id=ntab1 style="left:23px;top:104px;font-size:12px;letter-spacing:-0.4px">текстовыт.html</div>
<div class="m" id=ntab2 style="left:138px;top:104px;font-size:12px;color:#8c8c8c;letter-spacing:-0.33px">документ.css</div>
<svg class="abs" style="left:102px;top:104px" width="11" height="11" viewBox="0 0 12 12"><rect width="12" height="12" rx="1" fill="#b5607c"/><path d="M3,3 L9,9 M9,3 L3,9" stroke="#fff" stroke-width="2"/></svg>
<svg class="abs" style="left:209px;top:104px" width="11" height="11" viewBox="0 0 12 12"><rect width="12" height="12" rx="1" fill="#a8a8a8"/><path d="M3,3 L9,9 M9,3 L3,9" stroke="#d8d8d8" stroke-width="2"/></svg>
<div class="abs" style="left:2px;top:121px;width:676px;height:583px;background:#fff"></div>
<div class="abs" style="left:1px;top:119.500px;width:678px;height:1.500px;background:#fff"></div><div class="abs" style="left:3px;top:121px;width:674px;height:1px;background:#9c9c9c"></div><div class="abs" style="left:4px;top:122px;width:672px;height:1px;background:#5e5e5e;z-index:3"></div>
<div class="abs" style="left:3px;top:121px;width:1px;height:581px;background:#8a8a8a"></div>
<div class="abs" style="left:677px;top:121px;width:1px;height:582px;background:#8a8a8a"></div>
<div id="ed" class="abs" style="left:4px;top:122px;width:671px;height:561px;background:#2a211c;overflow:hidden">
<div class="abs" style="left:0;top:0;width:55px;height:561px;background:#4b4942"></div>
<div class="abs" style="left:55px;top:0;width:14px;height:561px;background-color:#2f2824;background-image:linear-gradient(45deg,#5a4a42 25%,transparent 25%,transparent 75%,#5a4a42 75%),linear-gradient(45deg,#5a4a42 25%,transparent 25%,transparent 75%,#5a4a42 75%);background-size:2px 2px;background-position:0 0,1px 1px"></div>
<div class="abs" style="left:69px;top:392px;width:610px;height:23px;background:#4a3a33"></div>
<div class="ln" style="top:1px">1</div>
<div class="ln" style="top:24px">2</div>
<div class="ln" style="top:47px">3</div>
<div class="ln" style="top:70px">4</div>
<div class="ln" style="top:93px">5</div>
<div class="ln" style="top:116px">6</div>
<div class="ln" style="top:139px">7</div>
<div class="ln" style="top:162px">8</div>
<div class="ln" style="top:185px">9</div>
<div class="ln" style="top:208px">10</div>
<div class="ln" style="top:231px">11</div>
<div class="ln" style="top:254px">12</div>
<div class="ln" style="top:277px">13</div>
<div class="ln" style="top:300px">14</div>
<div class="ln" style="top:323px">15</div>
<div class="ln" style="top:346px">16</div>
<div class="ln" style="top:369px">17</div>
<div class="ln" style="top:392px">18</div>
<div class="abs" style="left:62px;top:40px;width:1px;height:214px;background:#3a4a50"></div>
<div class="abs" style="left:62px;top:172px;width:6px;height:1px;background:#3a4a50"></div>
<div class="abs" style="left:62px;top:333px;width:6px;height:1px;background:#3a4a50"></div>
<div class="abs" style="left:62px;top:246px;width:1.4px;height:158px;background:#f00"></div>
<div class="abs" style="left:62px;top:403px;width:7px;height:1.4px;background:#f00"></div>
<div class="abs" style="left:57.5px;top:30.5px;width:10px;height:10px;background:#f4f4f4;border:1px solid #a8a8a8"></div><div class="abs" style="left:59.5px;top:34.7px;width:6px;height:1.6px;background:#333"></div>
<div class="abs" style="left:57.5px;top:76.5px;width:10px;height:10px;background:#f4f4f4;border:1px solid #a8a8a8"></div><div class="abs" style="left:59.5px;top:80.7px;width:6px;height:1.6px;background:#333"></div>
<div class="abs" style="left:57.5px;top:214.5px;width:10px;height:10px;background:#f4f4f4;border:1px solid #a8a8a8"></div><div class="abs" style="left:59.5px;top:218.7px;width:6px;height:1.6px;background:#333"></div>
<div class="abs" style="left:57.5px;top:237.5px;width:10px;height:10px;background:#f2f2f2;border:1px solid #f00"></div><div class="abs" style="left:59.5px;top:241.7px;width:6px;height:1.6px;background:#f00"></div>
<div class="abs" style="left:57.5px;top:260.5px;width:10px;height:10px;background:#f2f2f2;border:1px solid #f00"></div><div class="abs" style="left:59.5px;top:264.7px;width:6px;height:1.6px;background:#333"></div>
<div class="abs" style="left:119px;top:47px;width:1px;height:345px;background-image:linear-gradient(#8a857a 50%,transparent 50%);background-size:1px 2px"></div>
<div class="abs" style="left:167px;top:277px;width:1px;height:23px;background-image:linear-gradient(#8a857a 50%,transparent 50%);background-size:1px 2px"></div>
<div class="code" style="left:70px;top:1px"><span class="cg">&lt;!</span>DOCTYPE html<span class="cg">&gt;</span></div>
<div class="code" style="left:118px;top:24px"><span class="cb">&lt;html&gt;</span></div>
<div class="code" style="left:166px;top:70px"><span class="cb">&lt;head&gt;</span></div>
<div class="code" style="left:166px;top:93px"><span class="cb">&lt;meta </span><span class="ca">charset</span>=<span class="cs">"UTF-8"</span><span class="cb">/&gt;</span></div>
<div class="code" style="left:166px;top:116px"><span class="cb">&lt;title&gt;</span> ну сайт<span class="cb">&lt;/title&gt;</span></div>
<div class="code" style="left:154px;top:139px"><span class="cb">&lt;link </span><span class="ca">href</span>=<span class="cs">"документ.css"</span> <span class="ca">rel</span>=<span class="cs">"stylesheet"</span></div>
<div class="code" style="left:166px;top:162px"><span class="cb">&lt;/head&gt;</span></div>
<div class="code" style="left:166px;top:208px"><span class="cb">&lt;body&gt;</span></div>
<div class="code" style="left:166px;top:231px"><span class="cb">&lt;ul </span><span class="ca">class</span>=<span class="cs">"meny"</span><span class="cb">&gt;</span></div>
<div class="code" style="left:166px;top:254px"><span class="cb">&lt;li&gt;</span>1<span class="cb">&lt;li/&gt;</span></div>
<div class="code" style="left:166px;top:300px"><span class="cb">&lt;ul/&gt;</span></div>
<div class="code" style="left:166px;top:323px"><span class="cb">&lt;/body&gt;</span></div>
<div class="code hl" style="left:70px;top:392px"><span class="cb">&lt;/html&gt;</span></div>
<div class="abs" style="left:153.500px;top:392px;width:1px;height:23px;background:#3cb2ff"></div>
</div>
<div class="abs" style="left:4px;top:684px;width:671px;height:16.700px;background:#f0f0f0;border-bottom:1px solid #e4e4e4"></div>
<div class="abs" style="left:22px;top:684px;width:374px;height:14.700px;background:#cdcdcd"></div>
<svg class="abs" style="left:9px;top:687.500px" width="8" height="9" viewBox="0 0 8 9"><path d="M6,0.8 L2,4.5 L6,8.2" fill="none" stroke="#505050" stroke-width="1.8"/></svg>
<svg class="abs" style="left:662px;top:687.500px" width="8" height="9" viewBox="0 0 8 9"><path d="M2,0.8 L6,4.5 L2,8.2" fill="none" stroke="#505050" stroke-width="1.8"/></svg>
<div class="abs" style="left:1px;top:702.200px;width:678px;height:1.800px;background:linear-gradient(#6a6a6a,#7a7a7a)"></div>
<div class="abs" style="left:1px;top:704px;width:678px;height:23px;background:#f0f0f0"></div>
<div class="abs" style="left:138px;top:706px;width:2px;height:20px;background:linear-gradient(90deg,#d2d2d2 50%,#fff 50%)"></div>
<div class="abs" style="left:398px;top:706px;width:2px;height:20px;background:linear-gradient(90deg,#d2d2d2 50%,#fff 50%)"></div>
<div class="abs" style="left:508px;top:706px;width:2px;height:20px;background:linear-gradient(90deg,#d2d2d2 50%,#fff 50%)"></div>
<div class="abs" style="left:628px;top:706px;width:2px;height:20px;background:linear-gradient(90deg,#d2d2d2 50%,#fff 50%)"></div>
<div class="abs" style="left:658px;top:706px;width:2px;height:20px;background:linear-gradient(90deg,#d2d2d2 50%,#fff 50%)"></div>
<div class="m" id=sb1 style="letter-spacing:-0.2px;left:3px;top:711px">length : 272    lines : 18</div>
<div class="m" id=sb2 style="letter-spacing:-0.37px;left:143px;top:711px">Ln : 18    Col : 8    Sel : 0 | 0</div>
<div class="m" id=sb3 style="letter-spacing:-0.36px;left:403px;top:711px">Windows (CR LF)</div>
<div class="m" id=sb4 style="letter-spacing:-0.2px;left:513px;top:711px">UTF-8-BOM</div>
<div class="m" id=sb5 style="letter-spacing:-0.5px;left:633px;top:711px">INS</div>
<div class="abs" style="left:675px;top:723px;width:2px;height:2px;background:#bcbcbc;box-shadow:-3px 0 #bcbcbc,-6px 0 #bcbcbc,0 -3px #bcbcbc,-3px -3px #bcbcbc,0 -6px #bcbcbc"></div>
<div class="abs" style="left:0;top:0;width:680px;height:728px;border:1px solid #6f8a70;pointer-events:none"></div>
</div>
</div></body>
</html>
